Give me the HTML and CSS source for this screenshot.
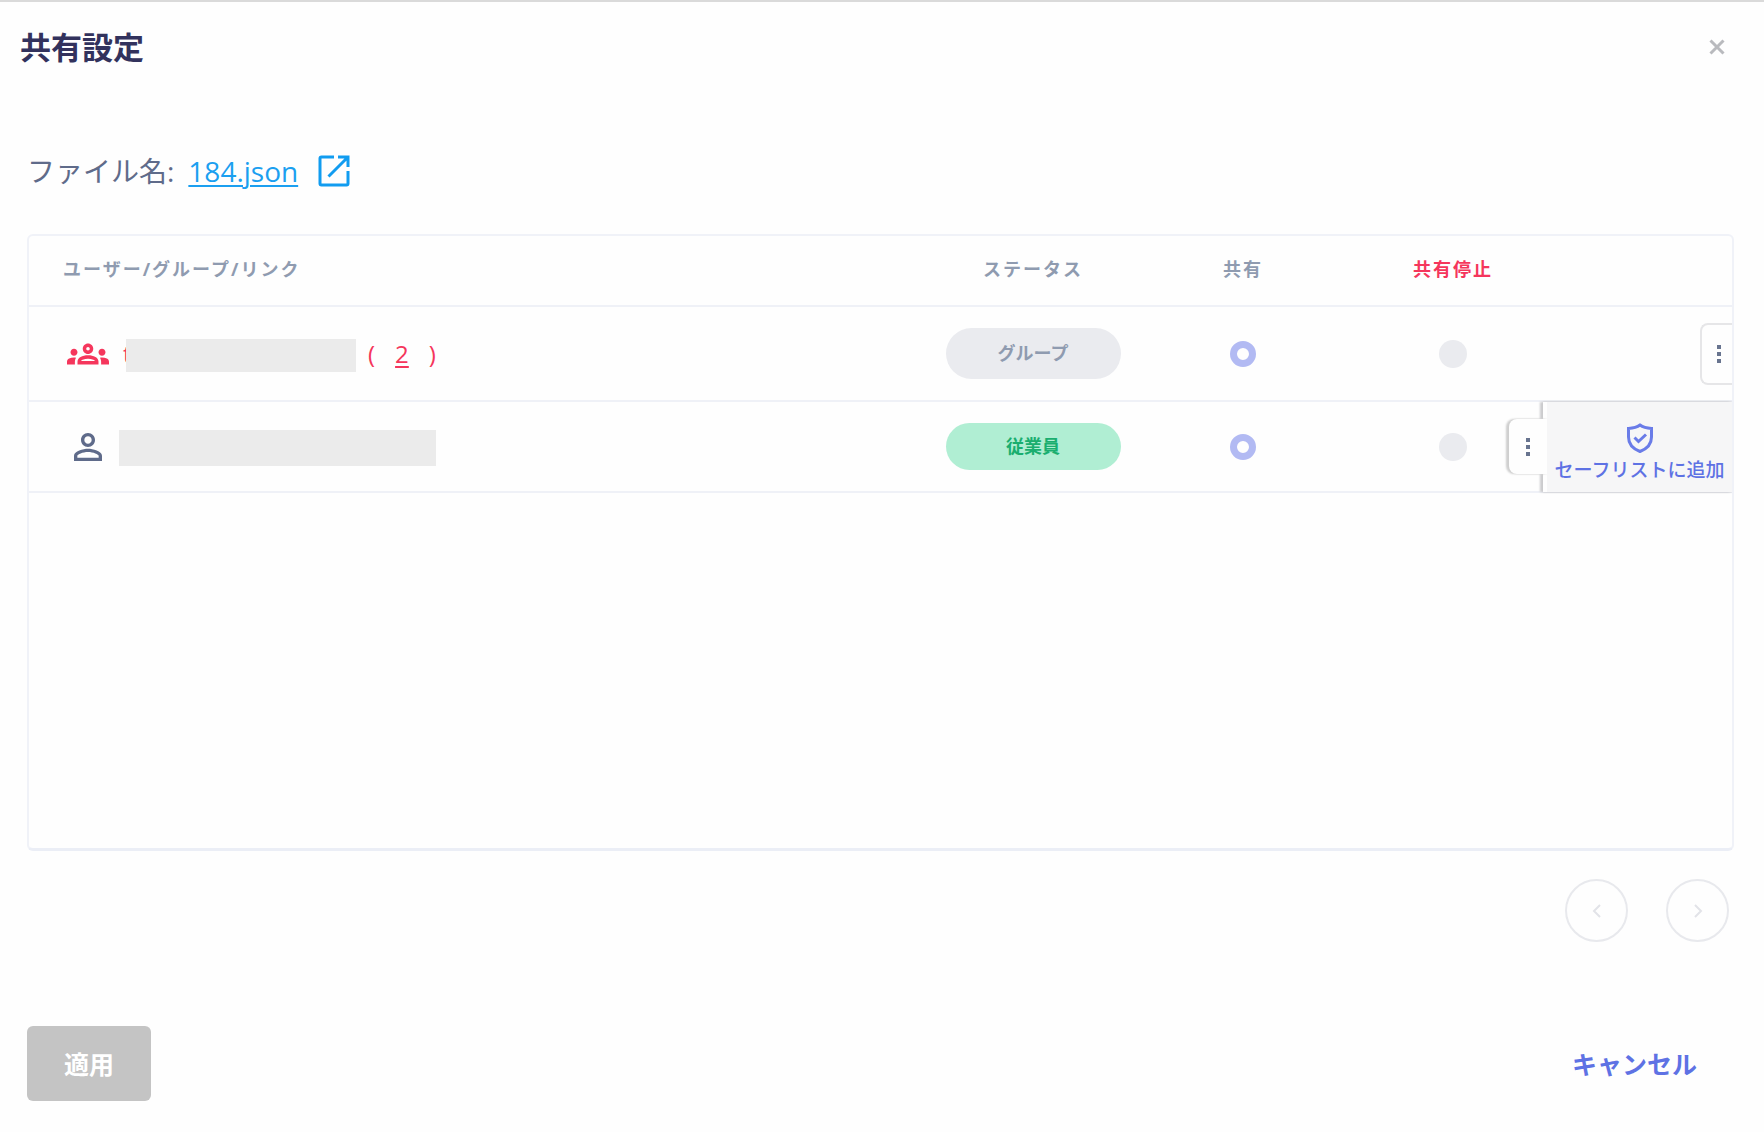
FILE: index.html
```html
<!DOCTYPE html>
<html lang="ja">
<head>
  <meta charset="UTF-8" />
  <meta name="viewport" content="width=device-width, initial-scale=1.0" />
  <title>共有設定</title>
  <link rel="stylesheet" href="styles.css">
</head>
<body>
  <div class="dialog">
    <header class="dialog-header">
      <h1>共有設定</h1>
      <button class="close-btn" type="button" aria-label="閉じる">
        <svg width="16" height="16" viewBox="0 0 16 16"><path d="M1.500 1.500l13 13M14.500 1.500L1.500 14.500" /></svg>
      </button>
    </header>

    <div class="file-row">
      <span>ファイル名:</span>
      <a class="file-link" href="#">184.json</a>
      <a class="open-link" href="#" aria-label="開く">
        <svg width="32" height="32" viewBox="0 0 32 32">
          <path d="M16 2H3.500Q2 2 2 3.500V28.500Q2 30 3.500 30H28.500Q30 30 30 28.500V16" />
          <path d="M20 2H30V12M30 2L10.500 21.500" />
        </svg>
      </a>
    </div>

    <div class="share-box">
      <table class="share-table">
        <thead>
          <tr>
            <th class="col-name">ユーザー/グループ/リンク</th>
            <th class="col-status">ステータス</th>
            <th class="col-choice">共有</th>
            <th class="col-choice stop">共有停止</th>
            <th class="col-menu"></th>
          </tr>
        </thead>
        <tbody>
          <tr class="row-group">
            <td>
              <div class="member danger">
                <svg class="member-icon" viewBox="0 0 24 24"><path d="M4 13c1.100 0 2-.9 2-2s-.9-2-2-2-2 .9-2 2 .9 2 2 2zm1.130 1.100C4.760 14.040 4.390 14 4 14c-.99 0-1.930.210-2.780.580C.480 14.900 0 15.620 0 16.430V18h4.500v-1.610c0-.83.230-1.610.630-2.290zM20 13c1.100 0 2-.9 2-2s-.9-2-2-2-2 .9-2 2 .9 2 2 2zm4 3.430c0-.81-.48-1.530-1.220-1.850C21.930 14.210 20.990 14 20 14c-.39 0-.76.040-1.130.1.4.680.630 1.460.630 2.290V18H24v-1.570zM16.240 13.650C15.070 13.130 13.630 12.750 12 12.750s-3.070.390-4.240.9C6.680 14.130 6 15.210 6 16.390V18h12v-1.610c0-1.180-.68-2.260-1.760-2.740zM8.070 16c.090-.23.130-.39.910-.69.970-.38 1.990-.56 3.020-.56s2.050.180 3.020.560c.770.300.810.460.910.690H8.070zM12 8c.55 0 1 .45 1 1s-.45 1-1 1-1-.45-1-1 .45-1 1-1m0-2c-1.660 0-3 1.340-3 3s1.340 3 3 3 3-1.340 3-3-1.340-3-3-3z" /></svg>
                <span class="name">t</span>
                <span class="mask mask-group"></span>
                <span class="count"><span>(</span><a href="#">2</a><span>)</span></span>
              </div>
            </td>
            <td><span class="badge badge-group">グループ</span></td>
            <td><input type="radio" name="group" aria-label="共有" checked disabled></td>
            <td><input type="radio" name="group" aria-label="共有停止" disabled></td>
            <td class="menu-cell">
              <div class="drawer">
                <button class="handle" type="button" aria-label="メニュー">
                  <svg width="4" height="18" viewBox="0 0 4 18"><path d="M0 0h4v4H0zM0 7h4v4H0zM0 14h4v4H0z" /></svg>
                </button>
              </div>
            </td>
          </tr>
          <tr class="row-user">
            <td>
              <div class="member">
                <svg class="member-icon" viewBox="0 0 24 24"><path d="M12 5.900c1.160 0 2.100.940 2.100 2.100s-.94 2.100-2.100 2.100S9.900 9.160 9.900 8s.94-2.100 2.100-2.100m0 9c2.970 0 6.100 1.460 6.100 2.100v1.100H5.900V17c0-.64 3.130-2.100 6.100-2.100M12 4C9.790 4 8 5.790 8 8s1.790 4 4 4 4-1.790 4-4-1.790-4-4-4zm0 9c-2.670 0-8 1.340-8 4v3h16v-3c0-2.660-5.330-4-8-4z" /></svg>
                <span class="mask mask-user"></span>
              </div>
            </td>
            <td><span class="badge badge-employee">従業員</span></td>
            <td><input type="radio" name="user" aria-label="共有" checked disabled></td>
            <td><input type="radio" name="user" aria-label="共有停止" disabled></td>
            <td class="menu-cell">
              <div class="drawer open">
                <button class="handle" type="button" aria-label="メニュー">
                  <svg width="4" height="18" viewBox="0 0 4 18"><path d="M0 0h4v4H0zM0 7h4v4H0zM0 14h4v4H0z" /></svg>
                </button>
                <button class="safelist-btn" type="button">
                  <svg width="28" height="30" viewBox="0 0 28 30"><path d="M14 2Q10 5 2.500 5.500V14C2.500 21 7.500 26 14 28.500 20.500 26 25.500 21 25.500 14V5.500Q18 5 14 2z" /><path d="M8.500 14.500l4 4L20 11.500" /></svg>
                  <span>セーフリストに追加</span>
                </button>
              </div>
            </td>
          </tr>
        </tbody>
      </table>
    </div>

    <nav class="pager">
      <button type="button" aria-label="前へ" disabled>
        <svg width="10" height="14" viewBox="0 0 10 14"><path d="M8 1L2 7l6 6" /></svg>
      </button>
      <button type="button" aria-label="次へ" disabled>
        <svg width="10" height="14" viewBox="0 0 10 14"><path d="M2 1l6 6-6 6" /></svg>
      </button>
    </nav>

    <footer class="dialog-footer">
      <button class="apply-btn" type="button" disabled>適用</button>
      <button class="cancel-btn" type="button">キャンセル</button>
    </footer>
  </div>
</body>
</html>
```
FILE: styles.css
```css
* {
  box-sizing: border-box;
}

body {
  margin: 0;
  background: #fefefe;
  color: #5f6b8a;
  font-family: "Open Sans", "Noto Sans CJK JP", sans-serif;
}

button {
  padding: 0;
  border: none;
  background: none;
  font-family: inherit;
  cursor: pointer;
}

svg {
  display: block;
  fill: none;
}

.dialog {
  min-height: 100vh;
  padding: 0 30px 24px 27px;
  border-top: 2px solid #dadada;
}

.dialog-header {
  display: flex;
  align-items: center;
  justify-content: space-between;
  height: 90px;
  margin-left: -7px;
}

h1 {
  margin: 0;
  color: #32325d;
  font-size: 31px;
  font-weight: bold;
  line-height: 40px;
}

.close-btn {
  padding: 9px;
}

.close-btn svg {
  stroke: #b9babe;
  stroke-width: 3;
}

.file-row {
  display: flex;
  align-items: center;
  height: 40px;
  margin: 59px 0 43px;
  font-size: 28px;
  line-height: 40px;
}

.file-link {
  margin-left: 14px;
  color: #1b9ff0;
  text-decoration-thickness: 2px;
  text-underline-offset: 3px;
}

.open-link {
  margin-left: 20px;
}

.open-link svg {
  stroke: #119cf0;
  stroke-width: 3;
}

/* table */
.share-box {
  min-height: 617px;
  border: 2px solid #f0f2f8;
  border-bottom: 3px solid #ebeef6;
  border-radius: 6px;
  overflow: hidden;
}

.share-table {
  width: 100%;
  table-layout: fixed;
  border-collapse: separate;
  border-spacing: 0;
}

th,
td {
  padding: 0;
  border-bottom: 2px solid #eff1f7;
  text-align: center;
}

th {
  height: 71px;
  padding-bottom: 4px;
  color: #8f9bb0;
  font-size: 18px;
  font-weight: bold;
  line-height: 24px;
  letter-spacing: 2px;
  white-space: nowrap;
}

th:first-child {
  padding-left: 34px;
  text-align: left;
}

.col-status,
.col-choice {
  width: 210px;
}

.col-menu {
  width: 174px;
}

th.stop {
  color: #f5365c;
}

.row-group td {
  height: 95px;
}

.row-user td {
  height: 91px;
}

.member {
  display: flex;
  align-items: center;
  padding-left: 38px;
  font-size: 24px;
  line-height: 36px;
}

.member-icon {
  flex: none;
  width: 42px;
  height: 42px;
  fill: #5f6b8a;
}

.danger,
.danger a {
  color: #f5365c;
}

.danger .member-icon {
  fill: #f5365c;
}

.name {
  width: 3px;
  margin-left: 14px;
}

.mask {
  position: relative;
  margin-top: 3px;
  background: #ebebeb;
}

.mask-group {
  width: 230px;
  height: 33px;
}

.mask-user {
  width: 317px;
  height: 36px;
  margin-left: 10px;
}

.count {
  display: flex;
  gap: 20px;
  margin-left: 12px;
}

.count a {
  text-decoration-thickness: 2px;
  text-underline-offset: 3px;
}

.badge {
  display: block;
  width: 175px;
  margin: 0 auto;
  border-radius: 26px;
  font-size: 18px;
  font-weight: bold;
}

.badge-group {
  background: #eaebef;
  color: #8f9bb0;
  line-height: 51px;
}

.badge-employee {
  background: #b0eed3;
  color: #1aae6f;
  line-height: 47px;
}

input[type="radio"] {
  display: block;
  width: 28px;
  height: 28px;
  margin: 0 auto;
  border-radius: 50%;
  background: #eaebef;
  appearance: none;
}

input[type="radio"]:checked {
  width: 26px;
  height: 26px;
  border: 7px solid #b2baf3;
  background: #fefefe;
}

.menu-cell {
  position: relative;
}

.drawer {
  position: absolute;
  top: 0;
  right: 0;
  bottom: 0;
  display: flex;
  align-items: center;
}

.handle {
  display: flex;
  align-items: center;
  justify-content: center;
  width: 32px;
  height: 62px;
  padding-left: 4px;
  border: 2px solid #e6e6e8;
  border-right: none;
  border-radius: 8px 0 0 8px;
  background: #fefefe;
}

.handle svg {
  fill: #68748f;
}

.open .handle {
  z-index: 1;
  width: 38px;
  height: 55px;
  margin-right: -4px;
  padding-left: 0;
  border: none;
  box-shadow: -3px 0 2px #cfcfcf, 0 0 2px #dddddd;
  clip-path: inset(-4px 0 -4px -6px);
}

.safelist-btn {
  display: flex;
  flex-direction: column;
  align-items: center;
  justify-content: center;
  gap: 4px;
  width: 189px;
  height: 90px;
  padding-top: 12px;
  border-left: 4px solid #fefefe;
  background: #f6f6f7;
  box-shadow: -3px 0 2px #cbcbcd, 0 0 2px #c4c4c8;
  color: #5e72e4;
  font-size: 19px;
  font-weight: 500;
  line-height: 26px;
  white-space: nowrap;
}

.safelist-btn svg {
  stroke: #6a7ce8;
  stroke-width: 3;
}

.pager {
  display: flex;
  justify-content: flex-end;
  gap: 38px;
  padding: 28px 5px 0 0;
}

.pager button {
  display: flex;
  align-items: center;
  justify-content: center;
  width: 63px;
  height: 63px;
  border: 2px solid #e8e9ed;
  border-radius: 50%;
}

.pager svg {
  stroke: #e2e3e8;
  stroke-width: 2;
}

.dialog-footer {
  display: flex;
  align-items: center;
  justify-content: space-between;
  margin-top: 84px;
}

.apply-btn,
.cancel-btn {
  height: 75px;
  padding-bottom: 2px;
  border-radius: 6px;
  font-size: 25px;
  font-weight: bold;
}

.apply-btn {
  width: 124px;
  background: #c4c4c4;
  color: #ffffff;
}

.cancel-btn {
  padding-right: 37px;
  padding-left: 37px;
  color: #5e72e4;
}
```
